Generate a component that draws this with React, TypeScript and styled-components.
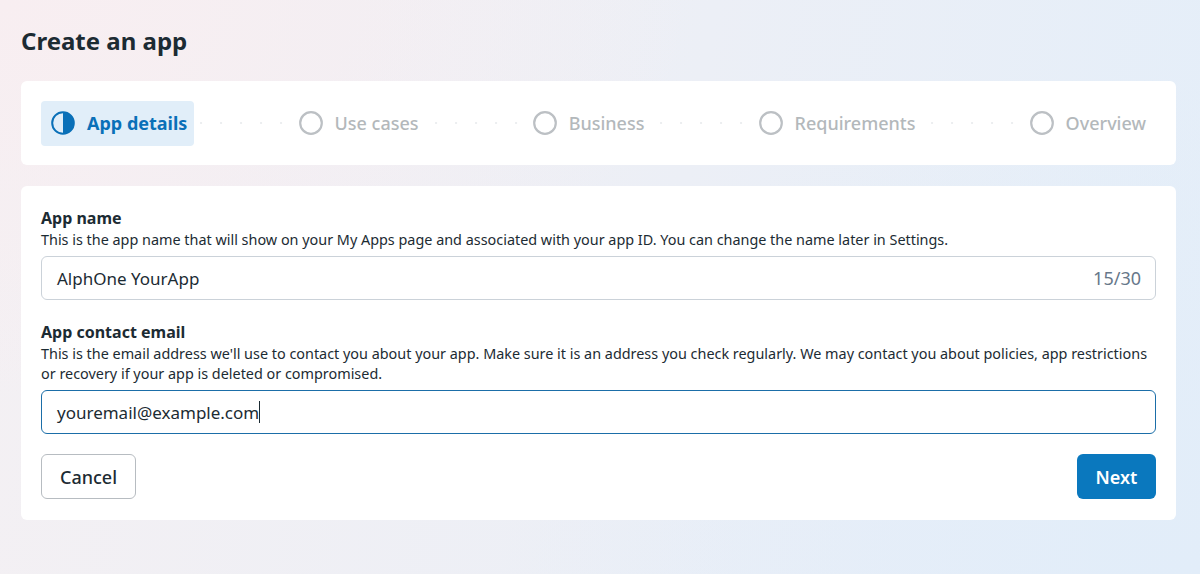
import React from "react";
import styled, { createGlobalStyle } from "styled-components";

const GlobalStyle = createGlobalStyle`
  html, body {
    margin: 0;
    padding: 0;
  }
  body {
    font-family: "Noto Sans", "Liberation Sans", sans-serif;
    color: #1c2b33;
  }
`;

type StepType = {
  label: string;
  active?: boolean;
};

const steps: StepType[] = [
  { label: "App details", active: true },
  { label: "Use cases" },
  { label: "Business" },
  { label: "Requirements" },
  { label: "Overview" },
];

const StepIcon: React.FC<{ active?: boolean }> = ({ active }) =>
  active ? (
    <svg width="24" height="24" viewBox="0 0 24 24">
      <circle cx="12" cy="12" r="10.8" fill="none" stroke="#0a70b8" strokeWidth="2" />
      <path d="M12 1.2 A10.8 10.8 0 0 1 12 22.8 Z" fill="#0a70b8" />
    </svg>
  ) : (
    <svg width="24" height="24" viewBox="0 0 24 24">
      <circle cx="12" cy="12" r="10.8" fill="none" stroke="#bcc0c4" strokeWidth="2.2" />
    </svg>
  );

const App: React.FC = () => {
  return (
    <>
      <GlobalStyle />
      <Page>
        <Title>Create an app</Title>
        <StepperCard>
          {steps.map((step, i) => (
            <React.Fragment key={step.label}>
              {i > 0 && <Connector />}
              <Step $active={step.active}>
                <StepIcon active={step.active} />
                <StepLabel $active={step.active}>{step.label}</StepLabel>
              </Step>
            </React.Fragment>
          ))}
        </StepperCard>

        <FormCard>
          <Field>
            <Label>App name</Label>
            <Help>
              This is the app name that will show on your My Apps page and
              associated with your app ID. You can change the name later in
              Settings.
            </Help>
            <InputBox>
              <InputText>AlphOne YourApp</InputText>
              <Counter>15/30</Counter>
            </InputBox>
          </Field>

          <Field>
            <Label>App contact email</Label>
            <Help>
              This is the email address we'll use to contact you about your
              app. Make sure it is an address you check regularly. We may
              contact you about policies, app restrictions or recovery if your
              app is deleted or compromised.
            </Help>
            <InputBox $focused>
              <InputText>
                youremail@example.com
                <Caret />
              </InputText>
            </InputBox>
          </Field>

          <Actions>
            <CancelButton>Cancel</CancelButton>
            <NextButton>Next</NextButton>
          </Actions>
        </FormCard>
      </Page>
    </>
  );
};

export default App;

const Page = styled.div`
  box-sizing: border-box;
  width: 1200px;
  height: 574px;
  padding: 25px 24px 0 21px;
  background:
    radial-gradient(ellipse 700px 400px at 0% 0%, #f8eef1 0%, rgba(248, 238, 241, 0) 100%),
    radial-gradient(ellipse 700px 500px at 100% 100%, #e2edf9 0%, rgba(226, 237, 249, 0) 100%),
    linear-gradient(100deg, #f4f0f3 0%, #eceff6 55%, #e4eef9 100%);
  overflow: hidden;
`;

const Title = styled.h1`
  margin: 0 0 24px;
  font-size: 24px;
  line-height: 32px;
  font-weight: 700;
  color: #1c2b33;
`;

const StepperCard = styled.div`
  box-sizing: border-box;
  width: 1155px;
  height: 84px;
  padding: 0 20px;
  display: flex;
  align-items: center;
  background: #ffffff;
  border-radius: 6px;
`;

const Step = styled.div<{ $active?: boolean }>`
  display: flex;
  align-items: center;
  gap: 12px;
  height: 45px;
  padding: ${(p) => (p.$active ? "0 7px 0 10px" : "0 10px")};
  border-radius: 4px;
  background: ${(p) => (p.$active ? "#e1eef9" : "transparent")};
`;

const StepLabel = styled.span<{ $active?: boolean }>`
  font-size: 18px;
  font-weight: ${(p) => (p.$active ? 700 : 500)};
  color: ${(p) => (p.$active ? "#0a70b8" : "#b3b8bb")};
`;

const Connector = styled.div`
  flex: 1;
  height: 4px;
  margin: 0 4px;
  background-image: radial-gradient(circle, #eceef0 1.1px, transparent 1.5px);
  background-size: 20px 4px;
  background-position: center;
`;

const FormCard = styled.div`
  box-sizing: border-box;
  width: 1155px;
  margin-top: 21px;
  padding: 20px 20px 21px;
  background: #ffffff;
  border-radius: 6px;
`;

const Field = styled.div`
  display: flex;
  flex-direction: column;
  margin-bottom: 20px;
`;

const Label = styled.div`
  font-size: 16px;
  line-height: 24px;
  font-weight: 700;
  color: #1c2b33;
`;

const Help = styled.div`
  font-size: 14.4px;
  line-height: 20px;
  color: #1c2b33;
  margin-bottom: 6px;
`;

const InputBox = styled.div<{ $focused?: boolean }>`
  box-sizing: border-box;
  height: 44px;
  display: flex;
  align-items: center;
  justify-content: space-between;
  padding: 0 14px 0 15px;
  border: 1px solid ${(p) => (p.$focused ? "#1b6ea8" : "#cbd2d9")};
  border-radius: 6px;
  background: #ffffff;
`;

const InputText = styled.span`
  display: flex;
  align-items: center;
  font-size: 17px;
  color: #1c2b33;
`;

const Caret = styled.span`
  display: inline-block;
  width: 1px;
  height: 22px;
  background: #1c2b33;
`;

const Counter = styled.span`
  font-size: 18px;
  color: #67788a;
`;

const Actions = styled.div`
  display: flex;
  justify-content: space-between;
  align-items: center;
`;

const BaseButton = styled.button`
  box-sizing: border-box;
  height: 45px;
  padding: 0;
  border-radius: 6px;
  font-family: inherit;
  font-size: 18px;
  font-weight: 500;
  cursor: pointer;
`;

const CancelButton = styled(BaseButton)`
  width: 95px;
  background: #ffffff;
  border: 1px solid #b7bcc1;
  color: #1c2b33;
`;

const NextButton = styled(BaseButton)`
  width: 79px;
  background: #0a78be;
  border: none;
  color: #ffffff;
  font-weight: 600;
`;
